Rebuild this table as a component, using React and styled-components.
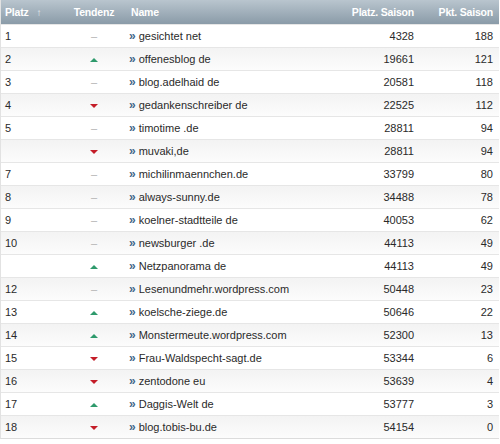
import React from "react";
import styled, { createGlobalStyle } from "styled-components";

const GlobalStyle = createGlobalStyle`
  body {
    margin: 0;
    background: #fff;
    font-family: "Liberation Sans", Arial, sans-serif;
  }
`;

const Table = styled.div`
  width: 498px;
  border-left: 1px solid #e2e2e2;
  border-bottom: 1px solid #dcdcdc;
  font-size: 11px;
  color: #2a2a2a;
`;

const Grid = styled.div`
  display: grid;
  grid-template-columns: 60px 66px 214px 79px 79px;
  align-items: center;
`;

const Header = styled(Grid)`
  height: 24px;
  background: linear-gradient(#b9c5ce, #8a9ba8);
  color: #fff;
  font-weight: bold;
  font-size: 10.5px;
`;

const HeadCell = styled.div`
  padding: 0 ${(p) => (p.$right ? "6px" : "4px")};
  text-align: ${(p) => (p.$right ? "right" : p.$center ? "center" : "left")};
  white-space: nowrap;
  letter-spacing: -0.2px;
`;

const SortArrow = styled.span`
  margin-left: 8px;
  color: #e6ecf0;
  font-size: 10px;
`;

const Row = styled(Grid)`
  height: 22px;
  border-top: 1px solid #e6e6e6;
  background: ${(p) =>
    p.$alt ? "linear-gradient(#f3f3f3, #fcfcfc)" : "#fff"};
  &:first-of-type {
    border-top: none;
    height: 23px;
  }
`;

const Cell = styled.div`
  padding: 0 ${(p) => (p.$right ? "6px" : "4px")};
  text-align: ${(p) => (p.$right ? "right" : p.$center ? "center" : "left")};
  white-space: nowrap;
`;

const NameCell = styled(Cell)`
  display: flex;
  align-items: center;
  gap: 3px;
  padding-left: 2px;
`;

const Chevron = styled.span`
  color: #3f6688;
  font-weight: bold;
  font-size: 12px;
  line-height: 1;
`;

const Dash = styled.span`
  color: #b2b2b2;
`;

const Triangle = styled.span`
  display: inline-block;
  width: 0;
  height: 0;
  border-left: 4px solid transparent;
  border-right: 4px solid transparent;
  ${(p) =>
    p.$up
      ? "border-bottom: 4px solid #2e9a6c;"
      : "border-top: 4px solid #c41d28;"}
  vertical-align: middle;
`;

const rows = [
  ["1", "same", "gesichtet net", "4328", "188"],
  ["2", "up", "offenesblog de", "19661", "121"],
  ["3", "same", "blog.adelhaid de", "20581", "118"],
  ["4", "down", "gedankenschreiber de", "22525", "112"],
  ["5", "same", "timotime .de", "28811", "94"],
  ["", "down", "muvaki,de", "28811", "94"],
  ["7", "same", "michilinmaennchen.de", "33799", "80"],
  ["8", "same", "always-sunny.de", "34488", "78"],
  ["9", "same", "koelner-stadtteile de", "40053", "62"],
  ["10", "same", "newsburger .de", "44113", "49"],
  ["", "up", "Netzpanorama de", "44113", "49"],
  ["12", "same", "Lesenundmehr.wordpress.com", "50448", "23"],
  ["13", "up", "koelsche-ziege.de", "50646", "22"],
  ["14", "up", "Monstermeute.wordpress.com", "52300", "13"],
  ["15", "down", "Frau-Waldspecht-sagt.de", "53344", "6"],
  ["16", "down", "zentodone eu", "53639", "4"],
  ["17", "up", "Daggis-Welt de", "53777", "3"],
  ["18", "down", "blog.tobis-bu.de", "54154", "0"],
];

const Trend = ({ t }) =>
  t === "same" ? <Dash>–</Dash> : <Triangle $up={t === "up"} />;

export default function App() {
  return (
    <>
      <GlobalStyle />
      <Table>
        <Header>
          <HeadCell>
            Platz<SortArrow>↑</SortArrow>
          </HeadCell>
          <HeadCell $center>Tendenz</HeadCell>
          <HeadCell>Name</HeadCell>
          <HeadCell $right>Platz. Saison</HeadCell>
          <HeadCell $right>Pkt. Saison</HeadCell>
        </Header>
        {rows.map((r, i) => (
          <Row key={i} $alt={i % 2 === 1}>
            <Cell>{r[0]}</Cell>
            <Cell $center>
              <Trend t={r[1]} />
            </Cell>
            <NameCell>
              <Chevron>»</Chevron>
              {r[2]}
            </NameCell>
            <Cell $right>{r[3]}</Cell>
            <Cell $right>{r[4]}</Cell>
          </Row>
        ))}
      </Table>
    </>
  );
}
